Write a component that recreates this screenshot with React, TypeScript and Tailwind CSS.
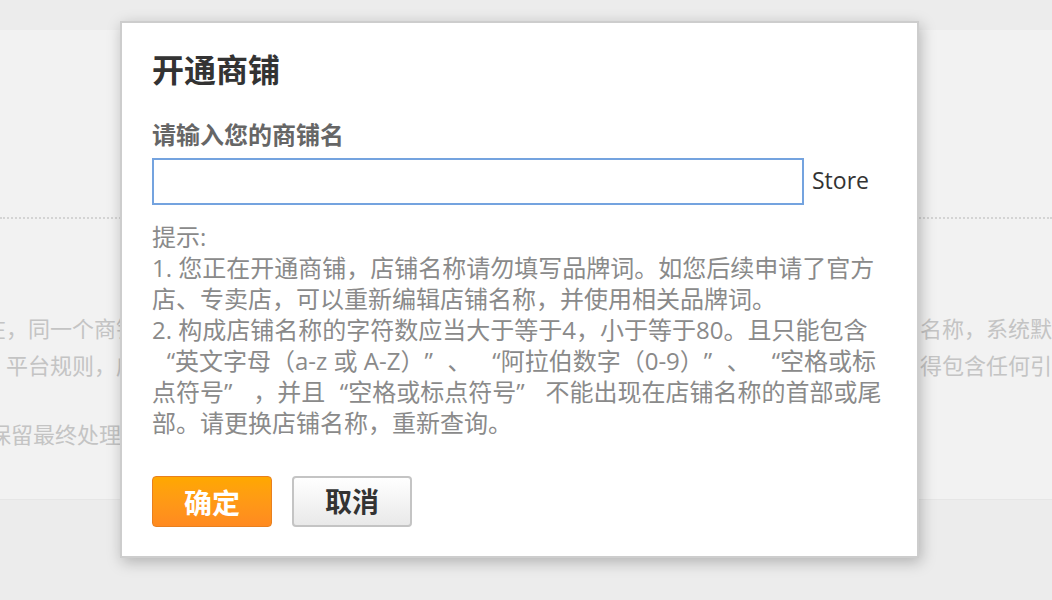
import React from "react";

const LQ = () => <span className="inline-block w-[23px] text-right">“</span>;
const RQ = () => <span className="inline-block w-[23px] text-left">”</span>;

export default function App() {
  return (
    <div className="relative h-[600px] w-full overflow-hidden bg-[#ececec] font-['Open_Sans','Noto_Sans_CJK_SC',sans-serif]">
      {/* background page */}
      <div className="mt-[30px] h-[470px] border-b border-[#e6e6e6] bg-[#f2f2f2]">
        <div className="h-[189px] border-b-2 border-dotted border-[#d4d4d4]" />
        <div className="pt-[90px] text-[22px] leading-[37px] text-[#c4c4c4] font-['Noto_Sans_CJK_SC',sans-serif]">
          <div className="grid grid-cols-[920px_1fr] whitespace-nowrap">
            <div className="overflow-hidden"><span className="-ml-[16px] inline-block">在，同一个商铺名称只能被一个商家使用，请勿重复提交相同的店铺</span></div>
            <div className="overflow-hidden">名称，系统默认保留先提交的商家申请。</div>
          </div>
          <div className="grid grid-cols-[920px_1fr] whitespace-nowrap">
            <div className="overflow-hidden"><span className="-ml-[16px] inline-block">，平台规则，店铺名称需真实有效，不得冒用他人品牌，不</span></div>
            <div className="overflow-hidden">得包含任何引人误解的词语。</div>
          </div>
          <div className="mt-[32px] grid grid-cols-[920px_1fr] whitespace-nowrap">
            <div className="overflow-hidden"><span className="-ml-[11px] inline-block">保留最终处理权。</span></div>
            <div />
          </div>
        </div>
      </div>

      {/* modal */}
      <div className="absolute left-[120px] top-[21px] w-[799px] border-2 border-[#cdcdcd] bg-white pl-[30px] pr-[20px] pt-[25px] pb-[29px] shadow-[2px_4px_14px_rgba(0,0,0,0.25)]">
        <div className="text-[32px] font-bold leading-[40px] text-[#333333] font-['Noto_Sans_CJK_SC',sans-serif]">开通商铺</div>
        <div className="mt-[31px] text-[24px] font-bold leading-[30px] text-[#666666] font-['Noto_Sans_CJK_SC',sans-serif]">请输入您的商铺名</div>
        <div className="mt-[9px] flex items-center">
          <input className="h-[47px] w-[652px] border-2 border-[#74a3df] bg-white px-2 outline-none" />
          <span className="mb-[3px] ml-[8px] text-[23px] text-[#333333]">Store</span>
        </div>
        <div className="mt-[16px] whitespace-nowrap text-[24px] leading-[31px] text-[#8a8a8a]">
          <div>提示:</div>
          <div>1. 您正在开通商铺，店铺名称请勿填写品牌词。如您后续申请了官方</div>
          <div>店、专卖店，可以重新编辑店铺名称，并使用相关品牌词。</div>
          <div>2. 构成店铺名称的字符数应当大于等于4，小于等于80。且只能包含</div>
          <div><LQ />英文字母（a-z 或 A-Z）<RQ />、 <LQ />阿拉伯数字（0-9）<RQ />、 <LQ />空格或标</div>
          <div>点符号<RQ /> ，并且<LQ />空格或标点符号<RQ /> 不能出现在店铺名称的首部或尾</div>
          <div>部。请更换店铺名称，重新查询。</div>
        </div>
        <div className="mt-[38px] flex gap-[20px]">
          <button className="h-[51px] w-[120px] rounded-[4px] border border-[#e8801f] bg-gradient-to-b from-[#ffa800] to-[#ff8a20] text-[28px] font-bold text-white font-['Noto_Sans_CJK_SC',sans-serif]">确定</button>
          <button className="h-[51px] w-[120px] rounded-[4px] border-2 border-[#c4c4c4] bg-gradient-to-b from-[#ffffff] to-[#e9e9e9] text-[27px] font-bold text-[#333333] font-['Noto_Sans_CJK_SC',sans-serif]">取消</button>
        </div>
      </div>
    </div>
  );
}
